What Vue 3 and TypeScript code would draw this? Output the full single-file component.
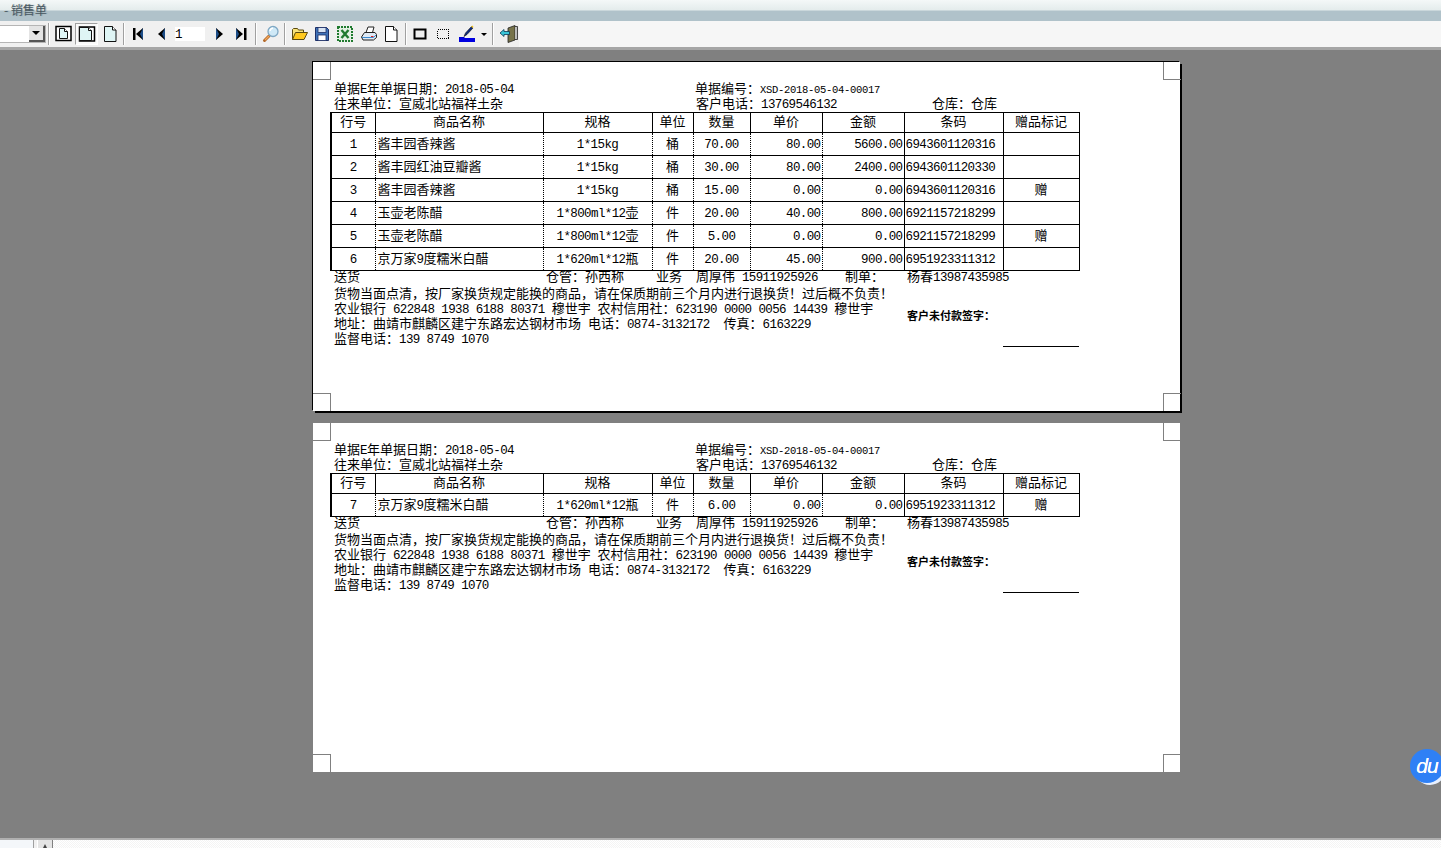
<template>
  <div class="window">
    <div class="titlebar"><span class="title">- 销售单</span></div>

    <div class="toolbar-row">
      <div class="toolbar">
        <div class="combo">
          <span class="combo-input"></span>
          <span class="combo-btn"><i class="arrow"></i></span>
        </div>
        <i class="sep"></i>
        <span class="btn">
          <svg width="18" height="18" viewBox="0 0 18 18"><rect x="1" y="1.500" width="15" height="14" fill="#fff" stroke="#000" stroke-width="1.500"/><path d="M4.500 3.500h5l3 3v7h-8z" fill="#dff5f5" stroke="#111" stroke-width="1"/><path d="M9.500 3.500v3h3" fill="#fff" stroke="#111"/></svg>
        </span>
        <span class="btn pressed">
          <svg width="18" height="18" viewBox="0 0 18 18"><rect x="1.500" y="2" width="15" height="14" fill="#fff" stroke="#000" stroke-width="1.500"/><path d="M1.500 2.500h9l3 3v10h-12z" fill="#dff5f5" stroke="#111" stroke-width="1"/><path d="M10.500 2.500v3h3" fill="#fff" stroke="#111"/></svg>
        </span>
        <span class="btn">
          <svg width="18" height="18" viewBox="0 0 18 18"><path d="M3.500 1.500h8l3.500 3.500v11.500h-11.500z" fill="#dff5f5" stroke="#111"/><path d="M11.500 1.500v3.500h3.500" fill="#fff" stroke="#111"/></svg>
        </span>
        <i class="sep"></i>
        <span class="btn"><svg width="16" height="16" viewBox="0 0 16 16"><rect x="3" y="2" width="2.500" height="12"/><path d="M13 2v12l-7-6z" fill="#000"/><path d="M13 2v12l-3-6z" fill="#1d4e89"/></svg></span>
        <span class="btn"><svg width="16" height="16" viewBox="0 0 16 16"><path d="M12 2v12l-7-6z" fill="#000"/><path d="M12 2v12l-3-6z" fill="#1d4e89"/></svg></span>
        <span class="page-input"><span class="n">1</span></span>
        <span class="btn"><svg width="16" height="16" viewBox="0 0 16 16"><path d="M6 2v12l7-6z" fill="#000"/><path d="M6 2v12l3-6z" fill="#1d4e89"/></svg></span>
        <span class="btn"><svg width="16" height="16" viewBox="0 0 16 16"><path d="M3 2v12l7-6z" fill="#000"/><path d="M3 2v12l3-6z" fill="#1d4e89"/><rect x="11" y="2" width="2.500" height="12"/></svg></span>
        <i class="sep"></i>
        <span class="btn">
          <svg width="18" height="18" viewBox="0 0 18 18"><path d="M7 11L2.500 15.500" stroke="#b46a2c" stroke-width="3" stroke-linecap="round"/><path d="M7 11L3 15" stroke="#f2a65a" stroke-width="1.200"/><circle cx="11" cy="6.500" r="5" fill="#cfe9f7" stroke="#7fa8c4" stroke-width="1.300"/><path d="M8 6a3.500 3.500 0 0 1 3-3" stroke="#fff" stroke-width="1.500" fill="none"/></svg>
        </span>
        <i class="sep"></i>
        <span class="btn">
          <svg width="18" height="18" viewBox="0 0 18 18"><path d="M1.500 14.500v-10l1-1h4l1 1.500h5v2.500" fill="#f7e27a" stroke="#5a4a10"/><path d="M1.500 14.500l3-7h12l-3.500 7z" fill="#ffc91f" stroke="#5a4a10"/></svg>
        </span>
        <span class="btn">
          <svg width="16" height="16" viewBox="0 0 16 16"><path d="M1.500 1.500h11l2 2v11h-13z" fill="#3f72b8" stroke="#1d2f66"/><rect x="4" y="1.500" width="8" height="5" fill="#d7e3f2" stroke="#1d2f66" stroke-width=".8"/><rect x="4" y="9" width="8" height="5.500" fill="#fff" stroke="#1d2f66" stroke-width=".8"/></svg>
        </span>
        <span class="btn">
          <svg width="16" height="16" viewBox="0 0 16 16"><rect x="1" y="1" width="14" height="14" fill="#e4f1e4" stroke="#1f7a2e" stroke-width="2" stroke-dasharray="2 1"/><path d="M4.500 4l7 8M11.500 4l-7 8" stroke="#1f7a2e" stroke-width="2.400"/></svg>
        </span>
        <span class="btn">
          <svg width="18" height="18" viewBox="0 0 18 18"><path d="M6 7.500l2-5.500h6l-1.500 5.500z" fill="#fff" stroke="#222"/><path d="M1.500 12l3-4.500h10.500l1.500 2v3l-3 2.500h-10.500z" fill="#dfeaf5" stroke="#222"/><path d="M11 11.500h2.500" stroke="#d22" stroke-width="1"/><path d="M2 12.500h11.500l2.500-2.500" fill="none" stroke="#3d8bd0"/></svg>
        </span>
        <span class="btn">
          <svg width="16" height="18" viewBox="0 0 16 18"><path d="M2.500 1.500h8l3.500 3.500v11.500h-11.500z" fill="#fff" stroke="#111"/><path d="M10.500 1.500v3.500h3.500" fill="#fff" stroke="#111"/></svg>
        </span>
        <i class="sep"></i>
        <span class="btn"><svg width="16" height="16" viewBox="0 0 16 16"><rect x="2.500" y="3.500" width="11" height="9" fill="none" stroke="#000" stroke-width="2"/></svg></span>
        <span class="btn"><svg width="16" height="16" viewBox="0 0 16 16" shape-rendering="crispEdges"><rect x="2.500" y="3.500" width="11" height="9" fill="none" stroke="#000" stroke-width="1" stroke-dasharray="1 1"/></svg></span>
        <span class="btn">
          <svg width="18" height="18" viewBox="0 0 18 18"><path d="M1 12.500h5.500" stroke="#0000c8"/><path d="M6 11.500l1.500-3.500 6-6.500 1.500 1.500-6 6.500z" fill="#0b2a80" stroke="#111" stroke-width=".6"/><path d="M13 1.500l1.500-1 1 1.500-1 1z" fill="#f0c020"/><rect x="1" y="13" width="16" height="4" fill="#0000e0"/></svg>
        </span>
        <span class="drop"><i class="arrow small"></i></span>
        <i class="sep"></i>
        <span class="btn">
          <svg width="20" height="18" viewBox="0 0 20 18"><path d="M9 3l7-2.500v14.500l-7 2.500z" fill="#77734a" stroke="#222" stroke-width=".8"/><path d="M16 1.500h2.500v13h-2.500" fill="#bdbdbd" stroke="#222" stroke-width=".8"/><path d="M1 8l4-3.500v2h5.500v3h-5.500v2z" fill="#39c6d8" stroke="#0b3a55" stroke-width=".8"/></svg>
        </span>
      </div>
    </div>

    <main class="preview">
      <section
        v-for="(page, p) in pages"
        :key="p"
        class="page"
        :class="{ selected: page.selected }"
      >
        <i class="corner tl"></i>
        <i class="corner tr"></i>
        <i class="corner bl"></i>
        <i class="corner br"></i>

        <div class="head head-a">
          <span><span v-for="(x, i) in parts('单据E年单据日期：2018-05-04')" :key="i" :class="{ n: x.a }">{{ x.t }}</span></span>
          <span class="small"><span v-for="(x, i) in parts('单据编号：XSD-2018-05-04-00017')" :key="i" :class="{ n: x.a }">{{ x.t }}</span></span>
        </div>
        <div class="head head-b">
          <span>往来单位：宣威北站福祥土杂</span>
          <span><span v-for="(x, i) in parts('客户电话：13769546132')" :key="i" :class="{ n: x.a }">{{ x.t }}</span></span>
          <span>仓库：仓库</span>
        </div>

        <table class="grid">
          <colgroup>
            <col v-for="w in colWidths" :key="w.key" :style="{ width: w.px + 'px' }">
          </colgroup>
          <thead>
            <tr>
              <th v-for="c in columns" :key="c">{{ c }}</th>
            </tr>
          </thead>
          <tbody>
            <tr v-for="row in page.rows" :key="row[0]">
              <td
                v-for="(cell, i) in row"
                :key="i"
                :class="cellClass[i]"
              >
                <span v-for="(x, j) in parts(cell)" :key="j" :class="{ n: x.a }">{{ x.t }}</span>
              </td>
            </tr>
          </tbody>
        </table>

        <div class="sign-row">
          <span>送货</span>
          <span>仓管：孙西称</span>
          <span>业务</span>
          <span><span v-for="(x, i) in parts('周厚伟 15911925926')" :key="i" :class="{ n: x.a }">{{ x.t }}</span></span>
          <span>制单：</span>
          <span><span v-for="(x, i) in parts('杨春13987435985')" :key="i" :class="{ n: x.a }">{{ x.t }}</span></span>
        </div>

        <div class="foot">
          <div class="notes">
            <p v-for="(line, l) in notes" :key="l">
              <span v-for="(x, i) in parts(line)" :key="i" :class="{ n: x.a }">{{ x.t }}</span>
            </p>
          </div>
          <div class="debt">
            <p class="debt-label">客户未付款签字：</p>
            <i class="debt-line"></i>
          </div>
        </div>
      </section>
    </main>

    <footer class="statusbar">
      <span class="status-left"></span>
      <span class="status-btn"><i class="status-arrow"></i></span>
      <span class="status-track"></span>
    </footer>

    <div class="du">
      <span class="du-text">du</span>
    </div>
  </div>
</template>

<script setup lang="ts">
// split into latin and CJK runs, the latin ones get the narrow mono font
function parts(text: string) {
  const runs = text.match(/[\x20-\x7e]+|[^\x20-\x7e]+/g) || []
  return runs.map((t) => ({ t, a: /^[\x20-\x7e]/.test(t) }))
}

const columns = ['行号', '商品名称', '规格', '单位', '数量', '单价', '金额', '条码', '赠品标记']

const colWidths = [44, 168, 109, 41, 57, 72, 82, 99, 76].map((px, key) => ({ px, key }))

const cellClass = ['c', 'l', 'c', 'c', 'c', 'r', 'r', 'code', 'c']

const pages = [
  {
    selected: true,
    rows: [
      ['1', '酱丰园香辣酱', '1*15kg', '桶', '70.00', '80.00', '5600.00', '6943601120316', ''],
      ['2', '酱丰园红油豆瓣酱', '1*15kg', '桶', '30.00', '80.00', '2400.00', '6943601120330', ''],
      ['3', '酱丰园香辣酱', '1*15kg', '桶', '15.00', '0.00', '0.00', '6943601120316', '赠'],
      ['4', '玉壶老陈醋', '1*800ml*12壶', '件', '20.00', '40.00', '800.00', '6921157218299', ''],
      ['5', '玉壶老陈醋', '1*800ml*12壶', '件', '5.00', '0.00', '0.00', '6921157218299', '赠'],
      ['6', '京万家9度糯米白醋', '1*620ml*12瓶', '件', '20.00', '45.00', '900.00', '6951923311312', ''],
    ],
  },
  {
    selected: false,
    rows: [
      ['7', '京万家9度糯米白醋', '1*620ml*12瓶', '件', '6.00', '0.00', '0.00', '6951923311312', '赠'],
    ],
  },
]

const notes = [
  '货物当面点清，按厂家换货规定能换的商品，请在保质期前三个月内进行退换货！过后概不负责！',
  '农业银行 622848 1938 6188 80371 穆世宇 农村信用社：623190 0000 0056 14439 穆世宇',
  '地址：曲靖市麒麟区建宁东路宏达钢材市场 电话：0874-3132172  传真：6163229',
  '监督电话：139 8749 1070',
]
</script>

<style scoped>
.window {
  position: relative;
  width: 1441px;
  height: 848px;
  overflow: hidden;
  display: flex;
  flex-direction: column;
  background: #808080;
  font-family: "Noto Sans CJK SC", "Liberation Sans", sans-serif;
  color: #000;
}

.titlebar {
  height: 21px;
  flex: none;
  background: linear-gradient(#f4f8f8 0, #e4ecec 10px, #b0c2ca 11px, #b0c2ca 21px);
}

.title {
  display: block;
  padding-left: 4px;
  font-size: 12px;
  line-height: 20px;
  color: #4a5a62;
  text-shadow: 1px 0 1px #8a9aa2;
}

.toolbar-row {
  height: 26px;
  flex: none;
  background: #f6f6f6;
  border-bottom: 3px solid #a6a6a6;
}

.toolbar {
  display: inline-flex;
  align-items: center;
  height: 26px;
  background: #f0f0f0;
}

.combo {
  display: flex;
  width: 46px;
  height: 18px;
  border: 1px solid #b5b5b5;
  border-left: 0;
  box-sizing: border-box;
  background: #fff;
}

.combo-input {
  flex: 1;
}

.combo-btn {
  width: 16px;
  display: flex;
  align-items: center;
  justify-content: center;
  background: #e4e4e4;
  border-right: 2px solid #555;
  border-bottom: 2px solid #555;
  box-sizing: border-box;
}

.arrow {
  width: 0;
  height: 0;
  border-left: 4px solid transparent;
  border-right: 4px solid transparent;
  border-top: 4px solid #000;
}

.arrow.small {
  border-left-width: 3px;
  border-right-width: 3px;
  border-top-width: 3px;
}

.sep {
  width: 2px;
  height: 22px;
  margin: 0 2px;
  background: linear-gradient(90deg, #a0a0a0 50%, #fff 50%);
}

.btn {
  width: 23px;
  height: 22px;
  box-sizing: border-box;
  padding-left: 3px;
  display: flex;
  align-items: center;
}

.btn.pressed {
  padding-left: 2px;
  border: 1px solid;
  border-color: #a0a0a0 #fff #fff #a0a0a0;
  background: #fafafa;
}

.page-input {
  width: 30px;
  height: 14px;
  margin: 0 2px;
  box-sizing: border-box;
  background: #fff;
  font-size: 10px;
  line-height: 14px;
}

.drop {
  width: 12px;
  height: 22px;
  display: flex;
  align-items: center;
  justify-content: center;
}

.preview {
  flex: 1;
  display: flex;
  flex-direction: column;
  gap: 12px;
  padding: 12px 0 0 313px;
  min-height: 0;
}

.page {
  position: relative;
  width: 867px;
  height: 349px;
  flex: none;
  box-sizing: border-box;
  padding: 18px 0 0 18px;
  background: #fff;
  font-size: 13px;
  line-height: 15px;
  white-space: pre;
}

.page.selected {
  box-shadow: -1px -1px 0 #000, 2px 2px 0 #000;
}

.corner {
  position: absolute;
  width: 18px;
  height: 18px;
  box-sizing: border-box;
  border: 0 solid #808080;
}

.tl {
  top: 0;
  left: 0;
  border-width: 0 1px 1px 0;
}

.tr {
  top: 0;
  right: -1px;
  border-width: 0 0 1px 1px;
}

.bl {
  bottom: 0;
  left: 0;
  border-width: 1px 1px 0 0;
}

.br {
  bottom: 0;
  right: -1px;
  border-width: 1px 0 0 1px;
}

/* line-height 0 so the second font does not stretch the line box */
.n {
  font-family: "Liberation Mono", monospace;
  font-size: 12.500px;
  line-height: 0;
  letter-spacing: -0.600px;
}

.small .n {
  font-size: 10.500px;
  letter-spacing: -0.300px;
}

.head {
  display: grid;
  padding-left: 3px;
  height: 15px;
}

.head-a {
  grid-template-columns: 361px auto;
}

.head-b {
  grid-template-columns: 362px 236px auto;
}

.grid {
  width: 748px;
  margin: 2px 0 0 -1px;
  table-layout: fixed;
  border-collapse: collapse;
  border-left: 2px solid #000;
}

.grid th,
.grid td {
  box-sizing: border-box;
  padding: 0 0 4px;
  border: 1px solid #000;
  overflow: hidden;
}

.grid th {
  height: 20px;
  font-weight: 400;
  text-align: center;
}

.grid td {
  height: 23px;
  border-left-style: dotted;
  border-right-style: dotted;
}

.grid td:first-child {
  border-left: 2px solid #000;
}

.grid td:nth-child(7),
.grid td:nth-child(8),
.grid td:nth-child(9) {
  border-right-style: solid;
}

.grid td:nth-child(8),
.grid td:nth-child(9) {
  border-left-style: solid;
}

.c {
  text-align: center;
}

.grid .l {
  padding-left: 2px;
}

.grid .r {
  padding-right: 1px;
  text-align: right;
}

.grid .code {
  padding-left: 1px;
}

.sign-row {
  display: grid;
  grid-template-columns: 212px 110px 40px 149px 62px auto;
  height: 15px;
  margin-top: -3px;
  padding-left: 3px;
}

.foot {
  display: grid;
  grid-template-columns: 573px auto;
  margin-top: 2px;
  padding-left: 3px;
}

.foot p {
  height: 15px;
  margin: 0;
}

.debt {
  padding-top: 23px;
}

.debt-label {
  font-size: 11px;
  font-weight: 700;
}

.debt-line {
  display: block;
  width: 76px;
  height: 1px;
  margin: 23px 0 0 96px;
  background: #000;
}

.statusbar {
  height: 10px;
  flex: none;
  display: flex;
  box-sizing: border-box;
  border-top: 2px solid #b0b0b0;
  background: #f0f0f0;
}

.status-left {
  width: 33px;
  background: #f4f7fa;
  border-right: 1px solid #a0a0a0;
}

.status-btn {
  width: 16px;
  margin-left: 3px;
  box-sizing: border-box;
  display: flex;
  justify-content: center;
  padding-top: 4px;
  background: #e4e4e4;
  border-left: 1px solid #fff;
  border-right: 1px solid #808080;
}

.status-arrow {
  width: 0;
  height: 0;
  border-left: 2px solid transparent;
  border-right: 2px solid transparent;
  border-bottom: 4px solid #444;
}

.status-track {
  flex: 1;
  background: repeating-conic-gradient(#f4f4f4 0 25%, #fff 0 50%) 0 0 / 2px 2px;
}

.du {
  position: absolute;
  left: 1410px;
  top: 749px;
  width: 34px;
  height: 34px;
  border-radius: 50%;
  background: #2f80f5;
  box-shadow: 3px 3px 0 -1px #e8f0ff;
  text-align: center;
}

.du-text {
  display: block;
  font-family: "Liberation Sans", sans-serif;
  font-size: 21px;
  font-style: italic;
  line-height: 33px;
  letter-spacing: -1px;
  color: #fff;
  text-shadow: 0 0 0.500px #fff;
}
</style>
